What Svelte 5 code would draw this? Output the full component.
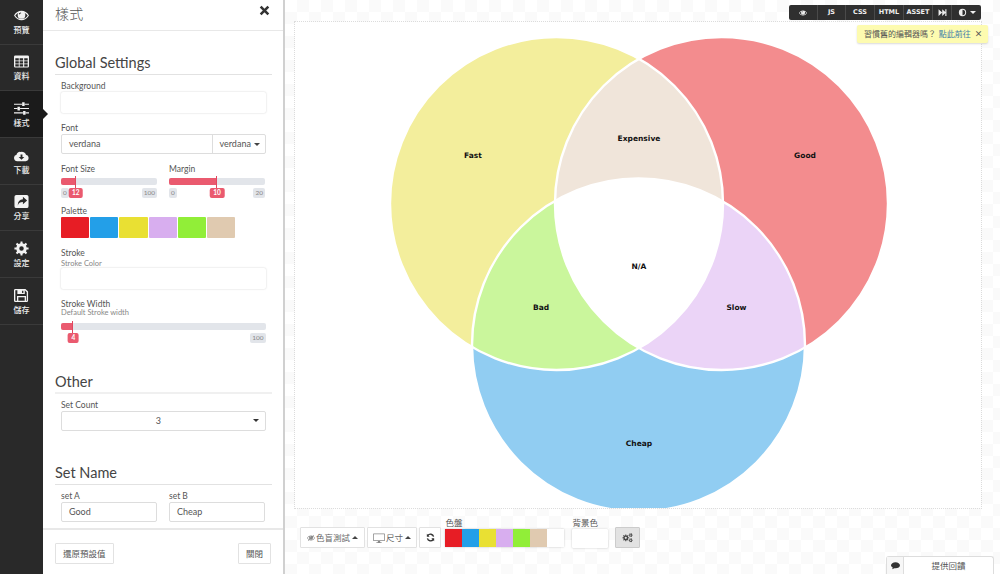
<script>
  function cog(cx, cy, ro, ri, hole, n = 8) {
    let d = '';
    const step = (Math.PI * 2) / n;
    for (let i = 0; i < n; i++) {
      const a = i * step;
      const pts = [[ri, a - step * 0.5], [ri, a - step * 0.27], [ro, a - step * 0.17], [ro, a + step * 0.17], [ri, a + step * 0.27]];
      for (const [r, t] of pts) {
        d += (d ? 'L' : 'M') + (cx + r * Math.cos(t)).toFixed(2) + ' ' + (cy + r * Math.sin(t)).toFixed(2);
      }
    }
    d += `zM${cx - hole} ${cy}a${hole} ${hole} 0 1 0 ${hole * 2} 0a${hole} ${hole} 0 1 0 ${-hole * 2} 0z`;
    return d;
  }

  function grid() {
    let d = 'M1.5 1.500h13A1.500 1.500 0 0 1 16 3v10a1.500 1.500 0 0 1-1.500 1.500h-13A1.500 1.500 0 0 1 0 13V3A1.500 1.500 0 0 1 1.500 1.500z';
    for (const y of [4.6, 7.8, 11]) {
      for (const x of [1.4, 6, 10.9]) {
        d += `M${x} ${y}h3.700v2.300h-3.700z`;
      }
    }
    return d;
  }

  const eye = 'M0 8C2 4.600 4.800 3 8 3s6 1.600 8 5c-2 3.400-4.800 5-8 5S2 11.400 0 8zM1.400 8c1.400 2.400 3.800 3.800 6.600 3.800s5.200-1.400 6.600-3.800c-.9-1.400-2-2.400-3.300-3 .5.700.8 1.600.8 2.500a4.100 4.100 0 0 1-8.200 0c0-.9.300-1.800.8-2.500C3.400 5.600 2.300 6.600 1.400 8zM6 5.200a.8.8 0 0 0 0 1.600c.8-.8 1.200-1 1.700-1.100a.8.8 0 0 0-.8-.8z';

  const nav = [
    { label: '預覽', d: eye },
    { label: '資料', d: grid() },
    { label: '樣式', active: true, d: 'M0 2.800h8.500v1.200H0zM11.500 2.800H16v1.200h-4.500zM8.700 1.400h2.600v4H8.700zM0 7.400h3.500v1.200H0zM6.500 7.400H16v1.200H6.500zM3.700 6h2.600v4H3.700zM0 12h9.500v1.200H0zM12.500 12H16v1.200h-3.500zM9.700 10.600h2.600v4H9.700z' },
    { label: '下載', d: 'M3.500 14A3.500 3.500 0 0 1 2.700 7.100 3.500 3.500 0 0 1 7 4.200 4.500 4.500 0 0 1 12.800 7.100 3.500 3.500 0 0 1 12.500 14zM7 6.800h2v2.800h2l-3 3-3-3h2z' },
    { label: '分享', d: 'M2.500 1h11a2 2 0 0 1 2 2v10a2 2 0 0 1-2 2h-11a2 2 0 0 1-2-2V3a2 2 0 0 1 2-2zM9.500 3L14 6.900l-4.500 3.900V8.500C6.500 8.500 5 9.400 4 12.300c0-4.200 2-6.400 5.500-6.600z' },
    { label: '設定', d: cog(8, 8, 7.6, 5.6, 2.4) },
    { label: '儲存', d: 'M1.500 1h10.700L15 3.800v9.700a1.500 1.500 0 0 1-1.500 1.500h-12A1.500 1.500 0 0 1 0 13.500v-11A1.500 1.500 0 0 1 1.500 1zM1.400 2.400v11.200h1.800V8.400h9.600v5.200h.8V4.500l-2.100-2.100v4H3.600v-4zM4.600 9.800v3.800h6.800V9.800zM8.600 2.800v2.400h1.400V2.800z' }
  ];

  const palette = ['#e71d25', '#239fe8', '#e9e033', '#d8aeef', '#91ee38', '#e0cab0'];

  const tools = [
    { text: 'JS', w: 28 }, { text: 'CSS', w: 29 }, { text: 'HTML', w: 29 }, { text: 'ASSET', w: 29 }
  ];

  const fs = { pct: 15.5 };
</script>

<div class="app">
  <nav class="nav">
    {#each nav as item}
      <div class="nav-item" class:active={item.active}>
        <svg class="nav-icon" viewBox="0 0 16 16"><path d={item.d} fill-rule={item.active ? 'nonzero' : 'evenodd'} /></svg>
        <span>{item.label}</span>
      </div>
    {/each}
  </nav>

  <aside class="panel">
    <header class="head">
      <h2>樣式</h2>
      <svg class="close" viewBox="0 0 10 10"><path d="M1.500 1.500l7 7M8.500 1.500l-7 7" /></svg>
    </header>
    <div class="body">
      <h3 class="first">Global Settings</h3>
      <div class="fields top5">
        <label class="lab">Background</label>
        <div class="box h21"></div>

        <label class="lab mt9">Font</label>
        <div class="fontrow">
          <span class="val">verdana</span>
          <span class="fontbtn">verdana <i class="caret"></i></span>
        </div>

        <div class="two mt9">
          <div>
            <label class="lab">Font Size</label>
            <div class="track"><div class="fill" style="width:{fs.pct}%"></div></div>
            <div class="tags">
              <span class="tag">0</span><span class="tag red" style="left:{fs.pct}%">12</span><span class="tag end">100</span>
            </div>
          </div>
          <div>
            <label class="lab">Margin</label>
            <div class="track"><div class="fill" style="width:50%"></div></div>
            <div class="tags">
              <span class="tag">0</span><span class="tag red" style="left:50%">10</span><span class="tag end">20</span>
            </div>
          </div>
        </div>

        <label class="lab mt7">Palette</label>
        <div class="swatches">
          {#each palette as c}
            <span class="sw" style="background:{c}"></span>
          {/each}
        </div>

        <label class="lab mt9">Stroke</label>
        <div class="sub">Stroke Color</div>
        <div class="box h21"></div>

        <label class="lab mt9">Stroke Width</label>
        <div class="sub tight">Default Stroke width</div>
        <div class="track wide"><div class="fill" style="width:6%"></div></div>
        <div class="tags tall">
          <span class="tag red" style="left:6%">4</span><span class="tag end">100</span>
        </div>
      </div>

      <h3 class="other">Other</h3>
      <div class="fields">
        <label class="lab mt5">Set Count</label>
        <div class="select"><span>3</span><i class="caret dark"></i></div>
      </div>

      <h3 class="setname">Set Name</h3>
      <div class="fields">
        <div class="two mt5">
          <div><label class="lab">set A</label><div class="input">Good</div></div>
          <div><label class="lab">set B</label><div class="input">Cheap</div></div>
        </div>
      </div>
    </div>
    <footer class="foot">
      <button class="btn">還原預設值</button>
      <button class="btn">關閉</button>
    </footer>
  </aside>

  <main class="main">
    <div class="canvas">
      <svg class="venn" viewBox="0 0 686 486">
        <defs>
          <clipPath id="ca"><circle cx="261.500" cy="181.500" r="166.500" /></clipPath>
          <clipPath id="cb"><circle cx="426.500" cy="181.500" r="166.500" /></clipPath>
        </defs>
        <circle cx="261.500" cy="181.500" r="166.500" fill="#f3ee9c" />
        <circle cx="426.500" cy="181.500" r="166.500" fill="#f38c8e" />
        <circle cx="343.500" cy="323" r="166.500" fill="#91cdf2" />
        <g clip-path="url(#ca)"><circle cx="426.500" cy="181.500" r="166.500" fill="#f0e5da" /></g>
        <g clip-path="url(#ca)"><circle cx="343.500" cy="323" r="166.500" fill="#caf69c" /></g>
        <g clip-path="url(#cb)"><circle cx="343.500" cy="323" r="166.500" fill="#ebd4f7" /></g>
        <g clip-path="url(#ca)"><g clip-path="url(#cb)"><circle cx="343.500" cy="323" r="166.500" fill="#fff" /></g></g>
        <g class="outl">
          <circle cx="261.500" cy="181.500" r="166.500" />
          <circle cx="426.500" cy="181.500" r="166.500" />
          <circle cx="343.500" cy="323" r="166.500" />
        </g>
        <g class="vt">
          <text x="178" y="136">Fast</text>
          <text x="510" y="136">Good</text>
          <text x="344" y="119">Expensive</text>
          <text x="344" y="246.500">N/A</text>
          <text x="246" y="288">Bad</text>
          <text x="441.500" y="288">Slow</text>
          <text x="344" y="424">Cheap</text>
        </g>
      </svg>
    </div>

    <div class="bar">
      <button class="tbtn w65">
        <svg class="i" viewBox="0 0 16 16"><path d={eye} fill-rule="evenodd" /><path d="M2 14L14 2" stroke="#888" stroke-width="1.200" /></svg>色盲測試<i class="caret up"></i>
      </button>
      <button class="tbtn w50">
        <svg class="i wide-i" viewBox="0 0 16 16"><path d="M1 2h14a1 1 0 0 1 1 1v8a1 1 0 0 1-1 1H9.500v1.500H11.500V14.500H4.500V13.500H6.500V12H1a1 1 0 0 1-1-1V3a1 1 0 0 1 1-1zM1 3v8h14V3z" fill-rule="evenodd" /></svg>尺寸<i class="caret up"></i>
      </button>
      <button class="tbtn w22">
        <svg class="i dark-i" viewBox="0 0 16 16"><path d="M13.500 6.500A5.800 5.800 0 0 0 3.200 4.400M2.500 9.500A5.800 5.800 0 0 0 12.800 11.600" fill="none" stroke="#333" stroke-width="2.400" /><path d="M1.500 1.500v5h5zM14.500 14.500v-5h-5z" fill="#333" /></svg>
      </button>
      <div class="pal">
        <span class="blab">色盤</span>
        <div class="palrow">
          {#each palette as c}
            <span class="psw" style="background:{c}"></span>
          {/each}
          <span class="psw blank"></span>
        </div>
      </div>
      <div class="bgc">
        <span class="blab">背景色</span>
        <div class="bgbox"></div>
      </div>
      <button class="gear">
        <svg class="cogs" viewBox="0 0 16 16"><path d={cog(5.500, 8.500, 5, 3.600, 1.600)} fill-rule="evenodd" /><path d={cog(12.700, 4.500, 3, 2.100, 1, 6)} fill-rule="evenodd" /><path d={cog(12.700, 12, 3, 2.100, 1, 6)} fill-rule="evenodd" /></svg>
      </button>
    </div>

    <div class="top">
      <span class="seg s1"><svg class="ti" viewBox="0 0 16 16"><path d={eye} fill-rule="evenodd" /></svg></span>
      {#each tools as t}
        <span class="seg" style="width:{t.w}px">{t.text}</span>
      {/each}
      <span class="seg s2"><svg class="ti big" viewBox="0 0 16 16"><path d="M1 2l6.500 6L1 14zM7.500 2L13 7V2h2v12h-2V9l-5.500 5z" /></svg></span>
      <span class="seg s3">
        <svg class="ti big" viewBox="0 0 16 16"><path d="M8 1.500a6.500 6.500 0 1 0 0 13 6.500 6.500 0 0 0 0-13zM8 3.300a4.700 4.700 0 0 1 0 9.400z" fill-rule="evenodd" /></svg>
        <i class="caret white"></i>
      </span>
    </div>

    <div class="note">習慣舊的編輯器嗎？ <a href="#x">點此前往</a> <b>×</b></div>

    <div class="feedback">
      <span class="fb-i"><svg viewBox="0 0 16 16"><path d="M8 2c4.400 0 8 2.500 8 5.500S12.400 13 8 13c-.8 0-1.500-.1-2.200-.2C4.800 13.700 3.500 14.200 2 14.500c.6-.9 1-1.800 1.100-2.900C1.200 10.600 0 9.100 0 7.500 0 4.500 3.600 2 8 2z" /></svg></span>
      <span class="fb-t">提供回饋</span>
    </div>
  </main>
</div>

<style>
  :global(body) { margin: 0; }
  .app {
    position: relative;
    width: 1000px;
    height: 574px;
    overflow: hidden;
    display: flex;
    font-family: Lato, "Noto Sans CJK TC", sans-serif;
    color: #555;
  }
  label { display: block; }

  .nav { width: 43px; flex: none; background: #292929; margin-top: -2px; height: 576px; }
  .nav-item {
    position: relative;
    height: 46.700px;
    box-sizing: border-box;
    border-bottom: 1px solid #3a3a3a;
    display: flex;
    flex-direction: column;
    align-items: center;
    padding-top: 9.500px;
    color: #eee;
    font: 500 8px/10px "Noto Sans CJK TC", sans-serif;
  }
  .nav-item span { margin-top: 2px; }
  .nav-item.active { background: #1b1b1b; }
  .nav-item.active::after {
    content: '';
    position: absolute;
    left: 43px;
    top: 18px;
    border: 5px solid transparent;
    border-left-color: #1b1b1b;
    border-right-width: 0;
    z-index: 3;
  }
  .nav-icon { width: 15px; height: 15px; fill: #f2f2f2; }

  .panel {
    width: 240px;
    flex: none;
    background: #fff;
    border-right: 2px solid #d0d0d0;
    display: flex;
    flex-direction: column;
    height: 574px;
  }
  .head {
    height: 30px;
    flex: none;
    border-bottom: 1px solid #e8e8e8;
    padding: 0 13px 0 12px;
    display: flex;
    align-items: flex-start;
    justify-content: space-between;
  }
  h2 { margin: 2px 0 0; font: 300 14px/22px "Noto Sans CJK TC", sans-serif; color: #555; letter-spacing: .3px; }
  .close { width: 11px; height: 11px; margin-top: 5px; fill: none; stroke: #333; stroke-width: 2.300; }

  .body { flex: 1; overflow: hidden; padding: 0 11.500px 0 12px; }
  h3 {
    margin: 0;
    height: 21px;
    font: 400 14.500px/20px Lato, sans-serif;
    color: #444;
    border-bottom: 1px solid #e2e2e2;
  }
  h3.first { margin-top: 22px; }
  h3.other { margin-top: 29px; border-bottom: 2px solid #f0f0f0; line-height: 22px; }
  h3.setname { margin-top: 32px; }

  .fields { padding: 0 6px; }
  .top5 { padding-top: 5px; }
  .lab { font: 400 8.500px/12px Lato, sans-serif; color: #555; }
  .mt9 { margin-top: 9px; }
  .mt7 { margin-top: 7px; }
  .mt5 { margin-top: 5px; }
  .box { background: #fff; border-radius: 2px; box-shadow: 0 0 2px rgba(0,0,0,.2); }
  .h21 { height: 21px; }

  .fontrow {
    display: flex;
    justify-content: space-between;
    align-items: center;
    height: 20px;
    box-sizing: border-box;
    border: 1px solid #ddd;
    border-radius: 2px;
    font: 400 9px/18px Lato, sans-serif;
  }
  .val { padding-left: 7px; }
  .fontbtn { width: 53px; box-sizing: border-box; border-left: 1px solid #ddd; padding-left: 7px; height: 18px; }

  .caret {
    display: inline-block;
    width: 0;
    height: 0;
    vertical-align: middle;
    border: 3px solid transparent;
    border-top: 3px solid #444;
    border-bottom-width: 0;
    margin-left: 1px;
  }
  .caret.up { border-top-width: 0; border-bottom: 3px solid #444; margin-left: 2px; }
  .caret.white { border-top-color: #eee; margin-left: 3px; }

  .two { display: grid; grid-template-columns: 96px 96px; column-gap: 12px; }

  .track { height: 7px; margin-top: 3px; background: #e2e5ea; border-radius: 2px; position: relative; }
  .track.wide { margin-top: 6px; }
  .fill { height: 100%; background: #ea5a6f; border-radius: 2px 0 0 2px; position: relative; }
  .fill::after {
    content: '';
    position: absolute;
    right: 0;
    top: -2px;
    height: 13px;
    width: 1px;
    background: #e0485f;
  }
  .tags { position: relative; height: 10px; margin-top: 3px; }
  .tags.tall { margin-top: 3px; height: 9px; }
  .tag {
    position: absolute;
    left: 0;
    top: 0;
    font: 400 6.500px/10px Lato, sans-serif;
    padding: 0 2px;
    background: #e2e5ea;
    color: #888;
    border-radius: 2px;
  }
  .tag.end { left: auto; right: 0; }
  .tag.red { background: #ea5a6f; color: #fff; transform: translateX(-50%); padding: 0 3.500px; font-weight: 700; }

  .swatches { display: flex; gap: 1px; }
  .sw { width: 28.200px; height: 21px; border-radius: 1px; }

  .sub { font: 400 7.500px/9px Lato, sans-serif; color: #888; }
  .sub.tight { margin-top: -2px; }

  .select {
    height: 20px;
    box-sizing: border-box;
    border: 1px solid #ddd;
    border-radius: 2px;
    display: flex;
    align-items: center;
    justify-content: center;
    position: relative;
    font: 400 9px/18px Lato, sans-serif;
    padding-right: 10px;
  }
  .caret.dark { position: absolute; right: 6px; top: 7px; border-top-color: #333; }

  .input {
    height: 20px;
    box-sizing: border-box;
    border: 1px solid #ddd;
    border-radius: 2px;
    padding-left: 7px;
    font: 400 9px/18px Lato, sans-serif;
  }

  .foot {
    height: 46px;
    flex: none;
    box-sizing: border-box;
    border-top: 2px solid #e8e8e8;
    padding: 13px 12px 0;
    display: flex;
    justify-content: space-between;
    align-items: flex-start;
  }
  .btn {
    height: 21px;
    padding: 0 7px;
    background: #fff;
    border: 1px solid #e2e2e2;
    border-radius: 1px;
    color: #555;
    font: 400 8.500px/19px "Noto Sans CJK TC", sans-serif;
  }

  .main {
    position: relative;
    flex: 1;
    height: 574px;
    box-sizing: border-box;
    padding: 22px 19px 0 10px;
    background-color: #fff;
    background-image: repeating-conic-gradient(#fafafa 0 25%, #fff 0 50%);
    background-size: 24px 24px;
  }
  .canvas {
    width: 686px;
    height: 486px;
    background: #fff;
    outline: 1px dotted #dcdcdc;
    overflow: hidden;
  }
  .venn { display: block; width: 686px; height: 486px; }
  .outl circle { fill: none; stroke: #fff; stroke-width: 2.400; }
  .vt text {
    font: 700 7.500px "DejaVu Sans", sans-serif;
    fill: #111;
    text-anchor: middle;
  }

  .bar { display: flex; align-items: flex-end; margin: 0 0 0 5px; height: 40px; }
  .tbtn {
    height: 21px;
    box-sizing: border-box;
    background: #fff;
    border: 1px solid #e2e2e2;
    border-radius: 1px;
    margin-right: 2px;
    padding: 0;
    display: flex;
    align-items: center;
    justify-content: center;
    color: #666;
    font: 400 8.500px/19px "Noto Sans CJK TC", sans-serif;
  }
  .w65 { width: 65px; }
  .w50 { width: 50px; }
  .w22 { width: 22px; }
  .i { width: 8px; height: 8px; margin-right: 1px; fill: #888; }
  .wide-i { width: 12px; height: 12px; }
  .dark-i { margin: 0; width: 9px; height: 9px; }

  .pal { margin-left: 1.500px; width: 120px; }
  .blab { display: block; font: 400 8.500px/11px "Noto Sans CJK TC", sans-serif; color: #555; padding-left: 1px; }
  .palrow { display: flex; height: 18px; margin-bottom: 1px; margin-top: 1px; border-radius: 1px; width: 119px; box-shadow: 0 0 2px rgba(0,0,0,.25); }
  .psw { width: 17px; height: 18px; }
  .blank { background: #fff; }
  .bgc { margin-left: 7px; width: 36px; }
  .bgbox { height: 19px; margin-top: 1px; background: #fff; box-shadow: 0 0 2px rgba(0,0,0,.25); border-radius: 1px; }
  .gear {
    margin-left: 7px;
    width: 25px;
    height: 21px;
    padding: 0;
    background: #e2e2e2;
    border: 1px solid #ccc;
    border-radius: 1px;
    display: flex;
    align-items: center;
    justify-content: center;
  }
  .cogs { width: 11px; height: 11px; fill: #444; }

  .top {
    position: absolute;
    top: 5px;
    left: 504px;
    display: flex;
    height: 15px;
    background: #2f2f2f;
    border-radius: 2px;
    color: #eee;
    font: 700 6.500px/15px "DejaVu Sans", sans-serif;
  }
  .seg {
    box-sizing: border-box;
    border-right: 1px solid #4a4a4a;
    display: flex;
    align-items: center;
    justify-content: center;
  }
  .s1 { width: 29px; }
  .s2 { width: 19px; }
  .s3 { width: 29px; border-right: 0; }
  .ti { width: 8px; height: 8px; fill: #eee; }
  .ti.big { width: 9px; height: 9px; }

  .note {
    position: absolute;
    top: 25px;
    left: 572px;
    width: 131px;
    height: 18px;
    box-sizing: border-box;
    padding-left: 7px;
    background: #fdfbb0;
    border-radius: 2px;
    box-shadow: 0 1px 2px rgba(0,0,0,.15);
    font: 400 8px/18px "Noto Sans CJK TC", sans-serif;
    color: #555;
    white-space: nowrap;
  }
  .note a { color: #3c7ea8; text-decoration: none; margin-left: 1px; }
  .note b { font-weight: 700; margin-left: 2px; }

  .feedback {
    position: absolute;
    left: 601px;
    bottom: 0;
    width: 108px;
    height: 18px;
    box-sizing: border-box;
    display: flex;
    background: #fff;
    border: 1px solid #ddd;
    border-bottom: 0;
    border-radius: 3px 3px 0 0;
  }
  .fb-i {
    width: 16px;
    flex: none;
    background: #f7f7f7;
    border-right: 1px solid #ddd;
    display: flex;
    align-items: center;
    justify-content: center;
  }
  .fb-i svg { width: 9px; height: 9px; fill: #333; }
  .fb-t { flex: 1; text-align: center; font: 400 8.500px/17px "Noto Sans CJK TC", sans-serif; color: #555; }
</style>
